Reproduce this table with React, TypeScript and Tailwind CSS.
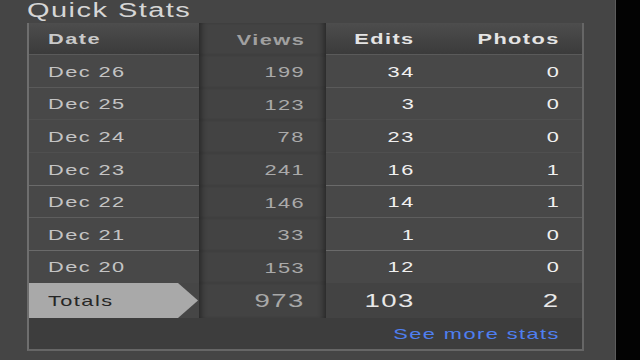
const rows = [
  { date: 'Dec 26', views: 199, edits: 34, photos: 0, line: 'border-[#5a5a5a]', h: 'h-[33px]' },
  { date: 'Dec 25', views: 123, edits: 3, photos: 0, line: 'border-[#4f4f4f]', h: 'h-[32px]' },
  { date: 'Dec 24', views: 78, edits: 23, photos: 0, line: 'border-[#4f4f4f]', h: 'h-[33px]' },
  { date: 'Dec 23', views: 241, edits: 16, photos: 1, line: 'border-[#6a6a6a]', h: 'h-[33px]' },
  { date: 'Dec 22', views: 146, edits: 14, photos: 1, line: 'border-[#5e5e5e]', h: 'h-[32px]' },
  { date: 'Dec 21', views: 33, edits: 1, photos: 0, line: 'border-[#6a6a6a]', h: 'h-[33px]' },
  { date: 'Dec 20', views: 153, edits: 12, photos: 0, line: 'border-transparent', h: 'h-[32px]' },
]

// the screenshot is stretched sideways, so text is widened to match
const wideL = 'inline-block origin-left scale-x-[1.45] tracking-[1px]'
const wideR = 'inline-block origin-right scale-x-[1.45] tracking-[1px]'
const viewsCol =
  'bg-[#434343] shadow-[inset_7px_0_6px_-5px_rgba(0,0,0,0.45),inset_-7px_0_6px_-5px_rgba(0,0,0,0.45)]'
const headCell = 'flex h-[32px] items-center border-b border-[#5a5a5a] bg-gradient-to-b from-[#4d4d4d] to-[#3b3b3b] font-bold'

export default function App() {
  return (
    <div className="flex h-[360px] w-[640px] overflow-hidden bg-black font-['Liberation_Sans',Arial,sans-serif]">
      <div className="w-[616px] border-r border-[#5c5c5c] bg-[#454545] pl-[27px]">
        <h2 className="h-[23px] text-[20px] leading-[20px] text-[#d6d6d6]">
          <span className={wideL}>Quick Stats</span>
        </h2>
        <div className="w-[557px] border-x-2 border-b-2 border-[#666666] border-l-[#6e6e6e]">
          <div className="grid grid-cols-[170px_127px_111px_1fr] text-[15px] leading-[15px]">
            {/* header */}
            <div className={`${headCell} pl-[19px] text-[#c9c9c9]`}>
              <span className={wideL}>Date</span>
            </div>
            <div className={`flex h-[32px] items-center justify-end pr-[21px] font-bold text-[#a0a0a0] ${viewsCol}`}>
              <span className={wideR}>Views</span>
            </div>
            <div className={`${headCell} justify-end pr-[22px] text-[#e4e4e4]`}>
              <span className={wideR}>Edits</span>
            </div>
            <div className={`${headCell} justify-end pr-[22px] text-[#e4e4e4]`}>
              <span className={wideR}>Photos</span>
            </div>

            {rows.map((r) => (
              <div key={r.date} className="contents">
                <div className={`flex items-center border-b bg-[#484848] pl-[19px] text-[#c4c4c4] ${r.h} ${r.line}`}>
                  <span className={wideL}>{r.date}</span>
                </div>
                <div className={`flex items-center justify-end pr-[21px] text-[#aaaaaa] ${r.h} ${viewsCol}`}>
                  <span className={wideR}>{r.views}</span>
                </div>
                <div className={`flex items-center justify-end border-b bg-[#484848] pr-[22px] text-[#f0f0f0] ${r.h} ${r.line}`}>
                  <span className={wideR}>{r.edits}</span>
                </div>
                <div className={`flex items-center justify-end border-b bg-[#484848] pr-[22px] text-[#f0f0f0] ${r.h} ${r.line}`}>
                  <span className={wideR}>{r.photos}</span>
                </div>
              </div>
            ))}

            {/* totals */}
            <div className="flex h-[35px] bg-[#464646]">
              <div className="flex flex-1 items-center bg-[#a9a9a9] pl-[19px] text-[#262626]">
                <span className={wideL}>Totals</span>
              </div>
              <svg width="21" height="35" viewBox="0 0 21 35" className="shrink-0">
                <polygon points="0,0 20,17.5 0,35" fill="#a9a9a9" />
              </svg>
            </div>
            <div className={`flex h-[35px] items-center justify-end pr-[21px] text-[19px] text-[#a8a8a8] ${viewsCol}`}>
              <span className={wideR}>973</span>
            </div>
            <div className="flex h-[35px] items-center justify-end bg-[#434343] pr-[22px] text-[19px] text-[#e8e8e8]">
              <span className={wideR}>103</span>
            </div>
            <div className="flex h-[35px] items-center justify-end bg-[#434343] pr-[22px] text-[19px] text-[#e8e8e8]">
              <span className={wideR}>2</span>
            </div>
          </div>

          <div className="flex h-[31px] items-center justify-end bg-[#3d3d3d] pr-[22px] text-[15px] leading-[15px] text-[#4f7ff0]">
            <span className={wideR}>See more stats</span>
          </div>
        </div>
      </div>
      <div className="flex-1 bg-[#030303]" />
    </div>
  )
}
